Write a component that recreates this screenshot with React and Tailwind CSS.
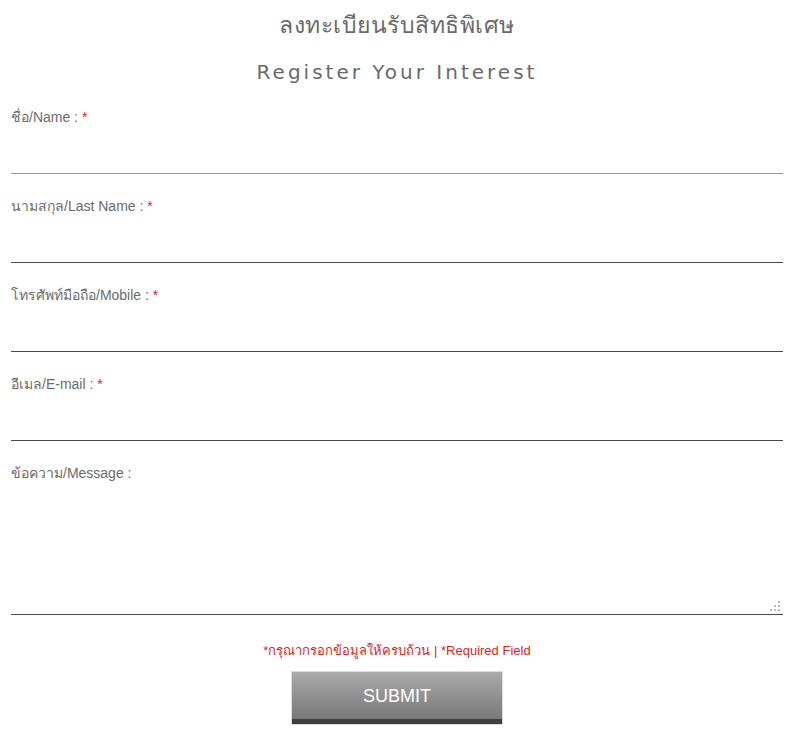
import React from "react";

function Field({ label, required, first }) {
  return (
    <div className="flex flex-col mb-[22px]">
      <label className="text-[14px] leading-[20px] text-[#6b6b6b]">
        {label} :{required && <span className="text-[#e2231a]"> *</span>}
      </label>
      <input
        type="text"
        className={`h-[47px] w-full border-0 border-b outline-none bg-transparent ${first ? "border-[#9a9a9a]" : "border-[#4a4a4a]"}`}
      />
    </div>
  );
}

export default function App() {
  return (
    <div
      className="w-[800px] h-[735px] bg-white pl-[11px] pr-[17px] overflow-hidden"
      style={{ fontFamily: '"Liberation Sans", Arial, sans-serif' }}
    >
      <div
        className="text-center text-[#6a6a6a]"
        style={{ fontFamily: '"DejaVu Sans", "Noto Sans", sans-serif' }}
      >
        <div className="pt-[9px] text-[23px] leading-[32px] tracking-[0.5px]">ลงทะเบียนรับสิทธิพิเศษ</div>
        <div className="mt-[18px] text-[20px] leading-[26px] tracking-[3px]">Register Your Interest</div>
      </div>
      <form className="mt-[22px]">
        <Field label="ชื่อ/Name" required first />
        <Field label="นามสกุล/Last Name" required />
        <Field label="โทรศัพท์มือถือ/Mobile" required />
        <Field label="อีเมล/E-mail" required />
        <div className="flex flex-col">
          <label className="text-[14px] leading-[20px] text-[#6b6b6b]">ข้อความ/Message :</label>
          <div className="relative">
            <textarea className="block h-[132px] w-full resize-none border-0 border-b border-[#4a4a4a] outline-none bg-transparent" />
            <svg className="absolute right-[2px] bottom-[3px]" width="12" height="12" viewBox="0 0 12 12">
              <g fill="#b8b8b8">
                <rect x="9" y="1" width="2" height="2" />
                <rect x="5" y="5" width="2" height="2" />
                <rect x="9" y="5" width="2" height="2" />
                <rect x="1" y="9" width="2" height="2" />
                <rect x="5" y="9" width="2" height="2" />
                <rect x="9" y="9" width="2" height="2" />
              </g>
            </svg>
          </div>
        </div>
        <div className="mt-[26px] text-center text-[13px] leading-[20px] text-[#e2231a]">
          *กรุณากรอกข้อมูลให้ครบถ้วน | *Required Field
        </div>
        <div className="mt-[10px] flex justify-center">
          <button
            type="button"
            className="w-[212px] h-[54px] border border-[#dcdcdc] bg-gradient-to-b from-[#aaaaaa] to-[#747474] text-white text-[18px] shadow-[inset_0_-5px_0_#3f3f3f] pb-[3px]"
          >
            SUBMIT
          </button>
        </div>
      </form>
    </div>
  );
}
